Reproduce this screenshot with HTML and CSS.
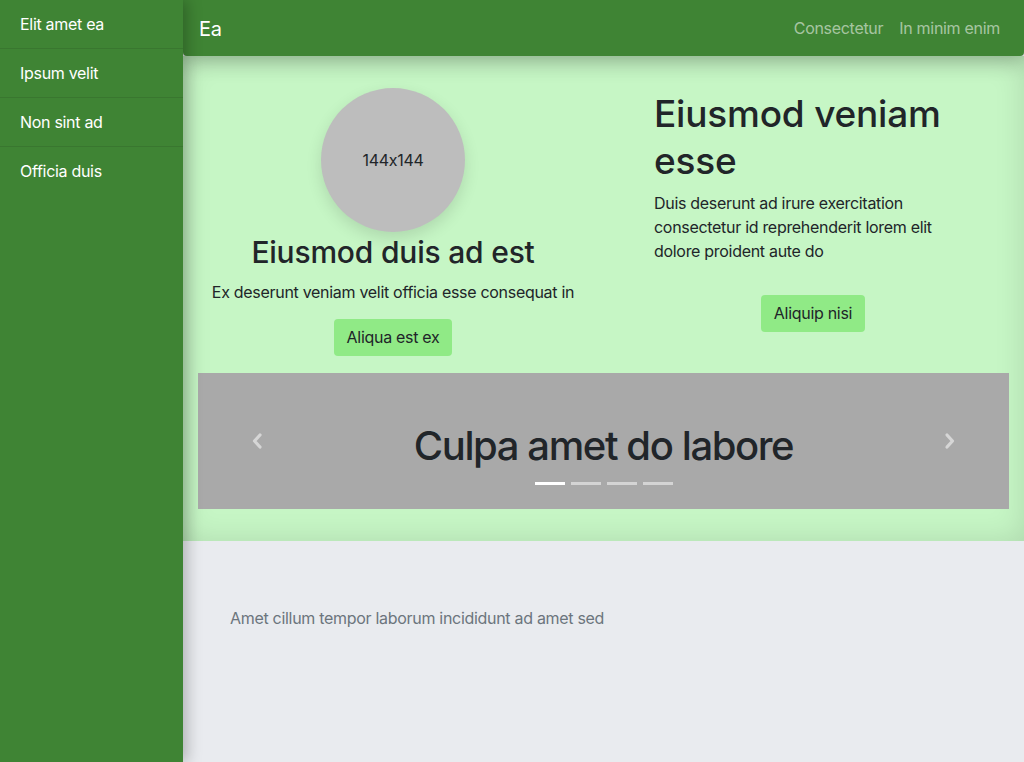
FILE: index.html
```html
<!DOCTYPE html>
<html>
<head>
<meta charset="utf-8">
<link rel="stylesheet" href="styles.css">
</head>
<body>
<div class="layout">
  <aside class="sidebar">
    <a class="side-item">Elit amet ea</a>
    <a class="side-item">Ipsum velit</a>
    <a class="side-item">Non sint ad</a>
    <a class="side-item">Officia duis</a>
  </aside>
  <div class="main">
    <nav class="navbar">
      <span class="brand">Ea</span>
      <div class="nav-links">
        <a>Consectetur</a>
        <a>In minim enim</a>
      </div>
    </nav>
    <section class="hero">
      <div class="hero-row">
        <div class="col-left">
          <div class="avatar">144x144</div>
          <h2 class="title-left">Eiusmod duis ad est</h2>
          <p class="text-left">Ex deserunt veniam velit officia esse consequat in</p>
          <button class="btn">Aliqua est ex</button>
        </div>
        <div class="col-right">
          <h1 class="title-right">Eiusmod veniam esse</h1>
          <p class="text-right">Duis deserunt ad irure exercitation consectetur id reprehenderit lorem elit dolore proident aute do</p>
          <div class="btn-wrap"><button class="btn">Aliquip nisi</button></div>
        </div>
      </div>
      <div class="carousel">
        <span class="arrow arrow-left">
          <svg width="14" height="20" viewBox="0 0 14 20"><path d="M10 4 L4.5 10 L10 16" fill="none" stroke="currentColor" stroke-width="3.2" stroke-linecap="round" stroke-linejoin="round"/></svg>
        </span>
        <div class="slide">
          <h2 class="slide-title">Culpa amet do labore</h2>
          <div class="indicators">
            <span class="ind active"></span><span class="ind"></span><span class="ind"></span><span class="ind"></span>
          </div>
        </div>
        <span class="arrow arrow-right">
          <svg width="14" height="20" viewBox="0 0 14 20"><path d="M4 4 L9.5 10 L4 16" fill="none" stroke="currentColor" stroke-width="3.2" stroke-linecap="round" stroke-linejoin="round"/></svg>
        </span>
      </div>
    </section>
    <section class="lower">
      <p>Amet cillum tempor laborum incididunt ad amet sed</p>
    </section>
  </div>
</div>
</body>
</html>
```
FILE: styles.css
```css
* { box-sizing: border-box; }
html, body { margin: 0; padding: 0; height: 100%; }
body {
  font-family: Inter, "Noto Sans", "Liberation Sans", sans-serif;
  font-feature-settings: "calt" 0;
  letter-spacing: -0.3px;
  color: #212529;
  background: #e9ebef;
  overflow: hidden;
}
.layout { display: flex; height: 762px; }
.sidebar {
  width: 183px;
  flex: 0 0 183px;
  background: #3f8434;
  box-shadow: 4px 0 14px rgba(0,0,0,0.25);
  position: relative;
  z-index: 3;
  display: flex;
  flex-direction: column;
}
.side-item {
  display: block;
  height: 49px;
  padding: 14px 20px 0;
  color: #fff;
  font-size: 16px;
  line-height: 20px;
  border-bottom: 1px solid #39772f;
}
.side-item:last-child { border-bottom: none; }
.main { flex: 1; display: flex; flex-direction: column; min-width: 0; }
.navbar {
  height: 56px;
  background: #3f8434;
  border-radius: 0 0 4px 4px;
  display: flex;
  align-items: center;
  justify-content: space-between;
  padding: 0 24px 0 16px;
  box-shadow: 0 4px 20px rgba(0,0,0,0.25);
  position: relative;
  z-index: 2;
}
.brand { color: #fff; font-size: 20px; line-height: 24px; padding-top: 1px; }
.nav-links { display: flex; gap: 16px; }
.nav-links a { color: rgba(255,255,255,0.55); font-size: 16px; }
.hero {
  background: #c6f6c5;
  padding: 32px 15px 32px;
  box-shadow: inset 0 0 30px rgba(0,0,0,0.12);
}
.hero-row { display: flex; }
.col-left {
  width: 390px;
  display: flex;
  flex-direction: column;
  align-items: center;
  text-align: center;
}
.avatar {
  width: 144px; height: 144px; border-radius: 50%;
  background: #bdbdbd;
  display: flex; align-items: center; justify-content: center;
  font-size: 16px; color: #212529;
  box-shadow: 0 6px 16px rgba(0,0,0,0.12);
}
.title-left { font-size: 30px; font-weight: 500; line-height: 34px; margin: 3px 0 0; letter-spacing: -0.2px; }
.text-left { font-size: 16px; line-height: 24px; margin: 11px 0 0; }
.btn {
  font-family: inherit;
  font-feature-settings: "calt" 0;
  letter-spacing: -0.3px;
  font-size: 16px;
  line-height: 24px;
  padding: 6px 13px 7px;
  background: #90ea86;
  color: #212529;
  border: none;
  border-radius: 4px;
}
.col-left .btn { margin-top: 15px; }
.col-right { margin-left: 66px; width: 318px; padding-top: 2px; }
.title-right { font-size: 37px; font-weight: 500; line-height: 47px; margin: 0; letter-spacing: -0.2px; }
.text-right { font-size: 16px; line-height: 24px; margin: 7px 0 0; padding-right: 20px; }
.btn-wrap { text-align: center; margin-top: 32px; }
.carousel {
  margin-top: 17px;
  height: 136px;
  background: #a9a9a9;
  display: flex;
  align-items: center;
  justify-content: space-between;
  padding: 0 52px 0 52px;
}
.arrow { color: #d6d6d6; display: flex; }
.slide { display: flex; flex-direction: column; align-items: center; padding-top: 24px; }
.slide-title { font-size: 40px; font-weight: 500; line-height: 48px; margin: 0; letter-spacing: -1.4px; }
.indicators { display: flex; gap: 6px; margin-top: 12px; }
.ind { width: 30px; height: 3px; background: rgba(255,255,255,0.5); }
.ind.active { background: #fff; }
.lower { flex: 1; padding: 65px 47px; background: #e9ebef; }
.lower p { margin: 0; color: #6c757d; font-size: 16px; line-height: 24px; }
```
